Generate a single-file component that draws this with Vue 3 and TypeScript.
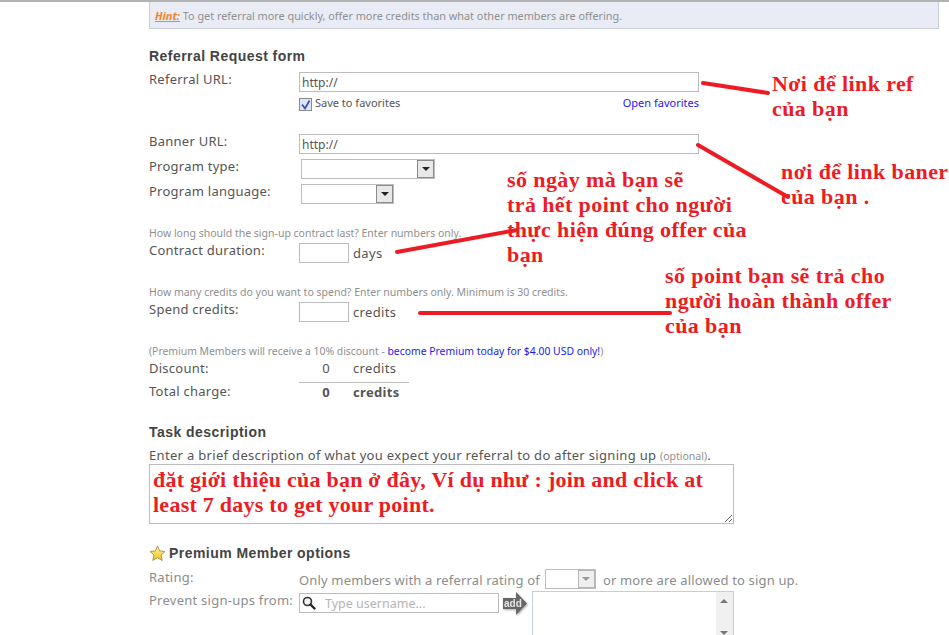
<script setup lang="ts">
// Referral request form with the red hand-written notes painted over it
const taskText = 'đặt giới thiệu của bạn ở đây, Ví dụ như : join and click at\nleast 7 days to get your point.'

const notes = [
  { left: 772, top: 72, lines: ['Nơi để link ref', 'của bạn'] },
  { left: 781, top: 160, lines: ['nơi để link baner', 'của bạn .'] },
  { left: 507, top: 168, lines: ['số ngày mà bạn sẽ', 'trả hết point cho người', 'thực hiện đúng offer của', 'bạn'] },
  { left: 665, top: 264, lines: ['số point bạn sẽ trả cho', 'người hoàn thành offer', 'của bạn'] },
]

const strokes = [
  { x1: 703, y1: 83, x2: 768, y2: 93 },
  { x1: 698, y1: 145, x2: 788, y2: 197 },
  { x1: 397, y1: 252, x2: 517, y2: 230 },
  { x1: 420, y1: 313, x2: 670, y2: 313 },
]
</script>

<template>
  <div class="page">
    <div class="hint">
      <span class="hint__tag">Hint:</span> To get referral more quickly, offer more credits than what other members are offering.
    </div>

    <h2 class="heading heading--first">Referral Request form</h2>

    <div class="row row--url">
      <label class="lbl">Referral URL:</label>
      <input class="field field--url" type="text" value="http://" />
    </div>
    <div class="fav">
      <span class="fav__check">
        <svg width="11" height="11" viewBox="0 0 11 11">
          <path d="M2 5.5 L5 9.5 L9.5 1.5" fill="none" stroke="#3a4fa8" stroke-width="1.7" />
        </svg>
      </span>
      <span class="fav__text">Save to favorites</span>
      <a class="link fav__open">Open favorites</a>
    </div>

    <div class="row row--url row--banner">
      <label class="lbl">Banner URL:</label>
      <input class="field field--url" type="text" value="http://" />
    </div>
    <div class="row row--select">
      <label class="lbl">Program type:</label>
      <div class="select select--type"><span class="select__btn"><i class="tri"></i></span></div>
    </div>
    <div class="row row--select row--lang">
      <label class="lbl">Program language:</label>
      <div class="select select--lang"><span class="select__btn"><i class="tri"></i></span></div>
    </div>

    <p class="note note--contract">How long should the sign-up contract last? Enter numbers only.</p>
    <div class="row row--num">
      <label class="lbl">Contract duration:</label>
      <input class="field field--num" type="text" />
      <span class="unit">days</span>
    </div>

    <p class="note note--spend">How many credits do you want to spend? Enter numbers only. Minimum is 30 credits.</p>
    <div class="row row--num">
      <label class="lbl">Spend credits:</label>
      <input class="field field--num" type="text" />
      <span class="unit">credits</span>
    </div>

    <p class="note note--premium">(Premium Members will receive a 10% discount - <a class="link">become Premium today for $4.00 USD only!</a>)</p>
    <div class="row row--sum">
      <label class="lbl">Discount:</label>
      <div class="sum"><span class="sum__val">0</span><span class="sum__unit">credits</span></div>
    </div>
    <div class="row row--sum row--total">
      <label class="lbl">Total charge:</label>
      <div class="sum sum--total"><span class="sum__val">0</span><span class="sum__unit">credits</span></div>
    </div>

    <h2 class="heading heading--task">Task description</h2>
    <p class="task-intro">Enter a brief description of what you expect your referral to do after signing up <span class="task-intro__opt">(optional)</span>.</p>
    <textarea class="task" :value="taskText"></textarea>

    <h2 class="heading heading--premium">
      <svg class="star" width="17" height="17" viewBox="0 0 17 17">
        <defs>
          <linearGradient id="starFill" x1="0" y1="0" x2="0" y2="1">
            <stop offset="0" stop-color="#fff3a0" />
            <stop offset="1" stop-color="#f2c21e" />
          </linearGradient>
        </defs>
        <path d="M8.5 1 L10.7 5.9 L16 6.5 L12 10 L13.2 15.5 L8.5 12.7 L3.8 15.5 L5 10 L1 6.5 L6.3 5.9 Z" fill="url(#starFill)" stroke="#a99a55" stroke-width="1" stroke-linejoin="round" />
      </svg>
      Premium Member options
    </h2>
    <div class="row row--rating">
      <label class="lbl lbl--off">Rating:</label>
      <div class="rating">
        <span class="rating__text">Only members with a referral rating of</span>
        <div class="select select--rating"><span class="select__btn select__btn--off"><i class="tri tri--off"></i></span></div>
        <span class="rating__text">or more are allowed to sign up.</span>
      </div>
    </div>
    <div class="row row--block">
      <label class="lbl lbl--off">Prevent sign-ups from:</label>
      <div class="block">
        <div class="search">
          <svg width="14" height="14" viewBox="0 0 14 14">
            <circle cx="5.5" cy="5.5" r="4" fill="#eef1f5" stroke="#333" stroke-width="1.6" />
            <path d="M8.5 8.5 L12.5 12.5" stroke="#222" stroke-width="2.4" stroke-linecap="round" />
          </svg>
          <span class="search__ph">Type username...</span>
        </div>
        <div class="add">
          <svg width="25" height="24" viewBox="0 0 25 24">
            <path d="M0 6 H13 V0 L24 11.5 L13 23 V17 H0 Z" fill="#666" />
          </svg>
          <span class="add__text">add</span>
        </div>
        <div class="blocked">
          <div class="blocked__bar"><i class="mini mini--up"></i><i class="mini mini--down"></i></div>
        </div>
      </div>
    </div>

    <!-- the notes and strokes sit over the form, as they were painted on the screenshot -->
    <svg class="strokes" width="949" height="635">
      <line
        v-for="(s, i) in strokes"
        :key="i"
        :x1="s.x1"
        :y1="s.y1"
        :x2="s.x2"
        :y2="s.y2"
        stroke="#ed1c24"
        stroke-width="4"
        stroke-linecap="round"
      />
    </svg>
    <div
      v-for="n in notes"
      :key="n.left"
      class="paint"
      :style="{ left: n.left + 'px', top: n.top + 'px' }"
    >
      <div v-for="l in n.lines" :key="l">{{ l }}</div>
    </div>
  </div>
</template>

<style>
html,
body {
  margin: 0;
  background: #fff;
  overflow: hidden;
}
</style>

<style scoped>
.page {
  position: relative;
  box-sizing: border-box;
  width: 949px;
  height: 635px;
  overflow: hidden;
  padding-left: 149px;
  border-top: 2px solid #b2b2b2;
  font-family: "Noto Sans", "Liberation Sans", sans-serif;
  font-size: 13px;
  letter-spacing: 0.32px;
  color: #555;
}

.hint {
  box-sizing: border-box;
  width: 790px;
  height: 27px;
  padding: 6px 5px 0;
  background: #e9ecf5;
  border: 1px solid #c6cde1;
  border-top: none;
  font-size: 10.85px;
  letter-spacing: 0;
  line-height: 16px;
  color: #8f8f8f;
}

.hint__tag {
  color: #f58220;
  font-style: italic;
  font-weight: 700;
  text-decoration: underline;
}

.heading {
  margin: 0;
  font-family: "Liberation Sans", sans-serif;
  font-size: 14px;
  font-weight: 700;
  letter-spacing: 0.45px;
  line-height: 16px;
  color: #444;
}

.heading--first {
  margin-top: 19px;
}

.row {
  display: flex;
  align-items: flex-start;
}

.lbl {
  flex: 0 0 150px;
  margin-top: -1px;
  letter-spacing: 0.25px;
  line-height: 16px;
  white-space: nowrap;
}

.lbl--off {
  color: #8c8c8c;
}

.field {
  box-sizing: border-box;
  height: 20px;
  margin: 0;
  padding: 1px 2px 0;
  border: 1px solid #bcbcbc;
  background: #fff;
  font: inherit;
  font-size: 12px;
  letter-spacing: 0;
  color: #555;
  outline: none;
}

.field--url {
  width: 400px;
}

.field--num {
  width: 50px;
}

.row--url {
  margin-top: 8px;
}

.row--banner {
  margin-top: 23px;
}

.fav {
  display: flex;
  align-items: center;
  width: 400px;
  height: 14px;
  margin: 5px 0 0 150px;
  font-size: 11px;
  letter-spacing: 0;
}

.fav__check {
  box-sizing: border-box;
  display: block;
  width: 13px;
  height: 13px;
  margin-right: 3px;
  border: 1px solid #8a8a8a;
  background: #dfe6f3;
}

.fav__check svg {
  display: block;
}

.fav__text,
.fav__open {
  margin-top: -4px;
}

.fav__open {
  margin-left: auto;
}

.link {
  color: #1a1aee;
}

.row--select {
  margin-top: 5px;
}

.row--lang {
  margin-top: 5px;
}

.select {
  box-sizing: border-box;
  display: flex;
  justify-content: flex-end;
  height: 20px;
  margin-left: 2px;
  padding: 0;
  border: 1px solid #bcbcbc;
  background: #fff;
}

.select--type {
  width: 134px;
}

.select--lang {
  width: 93px;
}

.select--rating {
  width: 51px;
  margin: 0 7px 0 5px;
}

.select__btn {
  box-sizing: border-box;
  display: flex;
  align-items: center;
  justify-content: center;
  width: 17px;
  height: 18px;
  border: 1px solid #8a8a8a;
  background: #e8e8e8;
}

.select__btn--off {
  border-color: #b5b5b5;
  background: #efefef;
}

.tri {
  display: block;
  width: 0;
  height: 0;
  border-left: 4px solid transparent;
  border-right: 4px solid transparent;
  border-top: 4px solid #222;
}

.tri--off {
  border-top-color: #999;
}

.note {
  margin: 0;
  font-size: 10.5px;
  letter-spacing: 0;
  line-height: 14px;
  color: #8f8f8f;
}

.note--contract {
  margin-top: 22px;
}

.note--spend {
  margin-top: 22px;
}

.note--premium {
  margin-top: 22px;
  font-size: 10.4px;
}

.row--num {
  margin-top: 3px;
}

.unit {
  margin: 2px 0 0 4px;
  line-height: 16px;
}

.row--sum {
  height: 23px;
  margin-top: 3px;
  line-height: 16px;
}

.row--total {
  margin-top: 0;
}

.sum {
  box-sizing: border-box;
  display: flex;
  width: 110px;
  height: 23px;
  margin-top: -1px;
}

.sum--total {
  padding-top: 1px;
  border-top: 1px solid #bcbcbc;
  font-weight: 700;
  margin-top: -2px;
}

.sum__val {
  width: 31px;
  text-align: right;
}

.sum__unit {
  margin-left: 23px;
}

.heading--task {
  margin-top: 17px;
}

.task-intro {
  margin: 7px 0 0;
  line-height: 16px;
}

.task-intro__opt {
  font-size: 10.5px;
  letter-spacing: 0;
  color: #8f8f8f;
}

.task {
  box-sizing: border-box;
  display: block;
  width: 585px;
  height: 60px;
  margin: 0;
  padding: 2px 3px;
  border: 1px solid #bcbcbc;
  background: #fff;
  font-family: "Liberation Serif", serif;
  font-size: 22px;
  font-weight: 700;
  letter-spacing: 0.25px;
  line-height: 25px;
  color: #ed1c24;
  outline: none;
}

.heading--premium {
  display: flex;
  align-items: center;
  gap: 3px;
  margin-top: 20px;
  height: 18px;
}

.star {
  display: block;
}

.row--rating {
  margin-top: 7px;
  height: 20px;
}

.row--rating .lbl {
  margin-top: 0;
}

.rating {
  display: flex;
  align-items: center;
  height: 20px;
  letter-spacing: 0.16px;
  color: #8c8c8c;
}

.rating__text {
  margin-top: 2px;
}

.row--block {
  margin-top: 2px;
}

.row--block .lbl {
  margin-top: 1px;
}

.block {
  display: flex;
  align-items: flex-start;
}

.search {
  box-sizing: border-box;
  display: flex;
  align-items: center;
  gap: 9px;
  width: 200px;
  height: 20px;
  margin-top: 2px;
  padding-left: 2px;
  border: 1px solid #bcbcbc;
}

.search svg {
  display: block;
  flex: none;
}

.search__ph {
  font-size: 12.5px;
  letter-spacing: 0;
  color: #b4b4b4;
}

.add {
  position: relative;
  width: 25px;
  height: 24px;
  margin: 1px 4px 0;
  filter: drop-shadow(1px 1px 1px #aaa);
}

.add svg {
  display: block;
}

.add__text {
  position: absolute;
  left: 1px;
  top: 5px;
  font-family: "Liberation Sans", sans-serif;
  font-size: 10px;
  font-weight: 700;
  letter-spacing: 0;
  line-height: 14px;
  color: #e6e6e6;
}

.blocked {
  box-sizing: border-box;
  display: flex;
  justify-content: flex-end;
  width: 202px;
  height: 70px;
  border: 1px solid #c6cde1;
}

.blocked__bar {
  position: relative;
  width: 17px;
  height: 100%;
  background: #f0f0f0;
}

.mini {
  position: absolute;
  left: 4px;
  width: 0;
  height: 0;
  border-left: 4px solid transparent;
  border-right: 4px solid transparent;
}

.mini--up {
  top: 7px;
  border-bottom: 4px solid #777;
}

.mini--down {
  top: 39px;
  border-top: 4px solid #777;
}

.strokes {
  position: absolute;
  left: 0;
  top: -2px;
  pointer-events: none;
}

.paint {
  position: absolute;
  margin-top: -3px;
  font-family: "Liberation Serif", serif;
  font-size: 22px;
  font-weight: 700;
  letter-spacing: 0.4px;
  line-height: 25px;
  color: #ed1c24;
  white-space: nowrap;
}
</style>
